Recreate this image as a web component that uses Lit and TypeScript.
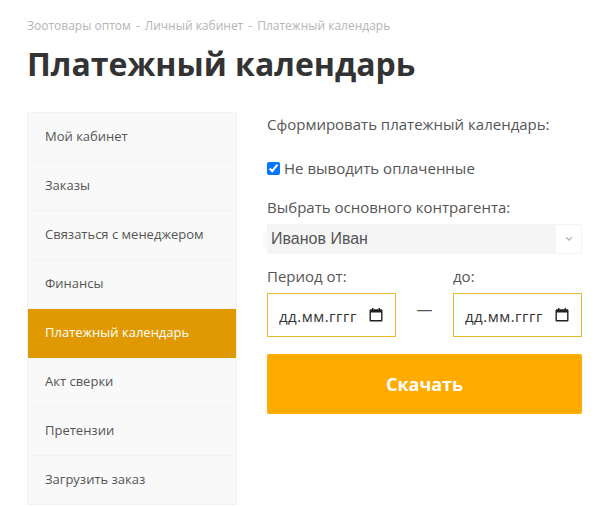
import { LitElement, html, css } from "lit";
import { customElement } from "lit/decorators.js";

const items = ["Мой кабинет", "Заказы", "Связаться с менеджером", "Финансы", "Платежный календарь", "Акт сверки", "Претензии", "Загрузить заказ"];

const dateField = () => html`<div class="date"><span>дд.мм.гггг</span>
  <svg class="cal" width="14" height="14" viewBox="0 0 14 14" aria-hidden="true">
    <path fill="#222" fill-rule="evenodd" d="M3 0h1.4v1.3h5.2V0H11v1.3h1.2c.8 0 1.3.6 1.3 1.3v9.6c0 .7-.5 1.3-1.3 1.3H1.8C1 13.5.5 12.9.5 12.2V2.6c0-.7.5-1.3 1.3-1.3H3zM1.9 4.4v7.7h10.2V4.4z"/>
  </svg></div>`;

@customElement("app-root")
export class AppRoot extends LitElement {
  static styles = css`
    :host { display: block; width: 606px; height: 506px; overflow: hidden; background: #fff; font-family: "Open Sans", sans-serif; color: #555; box-sizing: border-box; padding: 18px 24px 0 27px; }
    * { box-sizing: border-box; }
    .crumbs { display: flex; gap: 5px; font-size: 12px; line-height: 15px; color: #b5b5b5; }
    h1 { margin: 11px 0 0; font-size: 32px; line-height: 40px; font-weight: 700; color: #333; }
    .main { display: flex; gap: 30px; margin-top: 28px; }
    .side { width: 210px; flex: none; background: #f9f9f9; border: 1px solid #f3f3f3; border-bottom: none; border-radius: 2px 2px 0 0; }
    .item { height: 49px; padding: 0 0 2px 17px; display: flex; align-items: center; font-size: 13px; color: #555; border-bottom: 1px solid #f2f2f2; }
    .item.active { background: #e09900; color: #fff; border-bottom-color: #e09900; }
    .form { flex: 1; display: flex; flex-direction: column; }
    .heading { font-size: 15px; line-height: 20px; margin-top: 2px; color: #555; }
    .check { display: flex; align-items: center; gap: 4px; margin-top: 24px; font-size: 15px; line-height: 20px; }
    .check input { width: 13px; height: 13px; margin: 0; }
    .label { font-size: 15px; line-height: 20px; }
    .label.contr { margin-top: 19px; }
    .select { display: flex; height: 30px; margin-top: 7px; }
    .select .value { flex: 1; position: relative; background: #f5f5f5; font-family: "Liberation Sans", sans-serif; font-size: 16px; color: #555; display: flex; align-items: center; padding-left: 4px; }
    .select .value::before { content: ""; position: absolute; left: -4px; top: 8px; width: 4px; height: 16px; background: #f9f9f9; }
    .select .arrow { width: 27px; border: 1px solid #f4f4f4; display: flex; align-items: center; justify-content: center; }
    .period { display: grid; grid-template-columns: 129px 57px 129px; margin-top: 12px; }
    .date { grid-row: 2; height: 44px; margin-top: 7px; border: 1px solid #ecb92a; display: flex; align-items: center; justify-content: space-between; padding: 2px 12px 0 11px; font-size: 15px; color: #333; letter-spacing: 0.5px; }
    .cal { margin-top: -2px; flex: none; }
    .dash { grid-row: 2; align-self: center; text-align: center; font-size: 16px; color: #555; padding-bottom: 5px; }
    .btn { margin-top: 17px; height: 60px; background: #ffab00; color: #fff; font-weight: 700; font-size: 18px; display: flex; align-items: center; justify-content: center; border-radius: 2px; }
  `;
  render() {
    return html`
      <div class="crumbs"><span>Зоотовары оптом</span><span>-</span><span>Личный кабинет</span><span>-</span><span>Платежный календарь</span></div>
      <h1>Платежный календарь</h1>
      <div class="main">
        <nav class="side">
          ${items.map((t) => html`<div class="item ${t === "Платежный календарь" ? "active" : ""}">${t}</div>`)}
        </nav>
        <div class="form">
          <div class="heading">Сформировать платежный календарь:</div>
          <label class="check"><input type="checkbox" checked /><span>Не выводить оплаченные</span></label>
          <div class="label contr">Выбрать основного контрагента:</div>
          <div class="select"><div class="value">Иванов Иван</div>
            <div class="arrow"><svg width="8" height="6" viewBox="0 0 8 6" aria-hidden="true"><path d="M1 1.2 4 4.2 7 1.2" fill="none" stroke="#aaa" stroke-width="1.1"/></svg></div>
          </div>
          <div class="period">
            <div class="label">Период от:</div><div></div><div class="label">до:</div>
            ${dateField()}<div class="dash">—</div>${dateField()}
          </div>
          <div class="btn">Скачать</div>
        </div>
      </div>
    `;
  }
}
